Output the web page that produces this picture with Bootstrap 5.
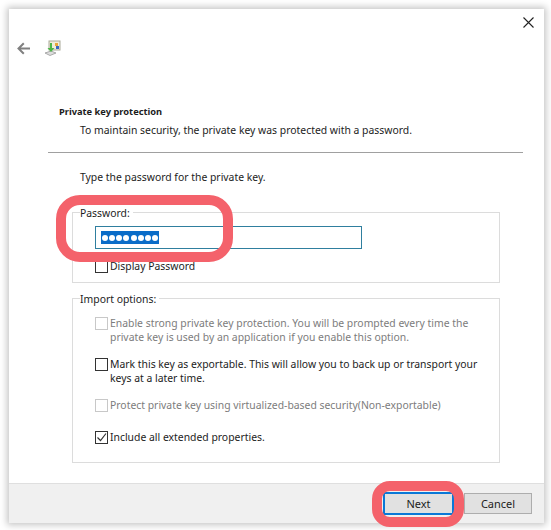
<!DOCTYPE html>
<html lang="en"><head><meta charset="utf-8">
<link href="https://cdn.jsdelivr.net/npm/bootstrap@5.3.0/dist/css/bootstrap.min.css" rel="stylesheet">
<style>
html,body{margin:0;height:530px;overflow:hidden;background:#fff}
body{font:10.4px/14px "Noto Sans","Open Sans",sans-serif;color:#1c1c1c;padding:9px 7px 7px 9px}
.dlg{position:relative;width:535px;height:514px;background:#fff;box-shadow:0 0 7px 2px #c4c4c4}
.topzone{height:96px;padding:26px 0 0 8px}
.closex{position:absolute;left:514px;top:8px}
.ttl{font-weight:700;font-size:9.3px;line-height:14px;padding-left:50px;height:14px}
.sub{padding-left:71px;height:22px;margin-top:4px;line-height:14px}
.rule{height:1px;background:#a0a0a0;margin:7px 21px 0 39px}
.lead-in{padding:17px 0 0 71px;height:40px;line-height:14px}
.gbox{margin:0 44px 0 63px;border:1px solid #dcdcdc;padding:0;min-width:0}
.gbox legend{float:none;width:auto;font-size:10.4px;line-height:14px;margin:0 0 0 7px;padding:2px 3px 0 0;color:#1c1c1c}
.g1{height:79px;margin-top:11px}
.g2{height:173px;margin-top:7px;position:relative}
.pw{margin:6px 0 0 22px;width:267px;height:23px;border:1px solid #2f7f9f;display:flex;align-items:center;padding-left:5px}
.sel{background:#0a6cc8;height:13px;width:58px;display:flex;align-items:center;justify-content:space-between;padding:0 1px;color:#fff}
.dot{width:6px;height:6px;border-radius:50%;background:#fff}
.cbrow{display:flex;gap:2px;align-items:flex-start;margin-left:22px;line-height:13.500px}
.box{flex:none;width:13px;height:13px;border:1px solid #333;margin-top:0;display:block;background:#fff}
.off{color:#7c7c7c}.off .box{border-color:#c8c8c8}
.bar{position:absolute;left:0;right:0;top:474px;height:40px;background:#f0f0f0;border-top:1px solid #dfdfdf;display:flex;justify-content:flex-end;align-items:flex-start;gap:10px;padding:8px 12px 0 0}
.wbtn{width:68px;height:21px;background:#e1e1e1;border:1px solid #adadad;border-radius:0;font:inherit;font-size:11px;color:#1c1c1c;padding:0;line-height:19px;margin-top:1px}
.wbtn.def{border:2px solid #0a78d7;width:71px;height:23px;margin-top:0;line-height:19px}
.hl{position:absolute;border:10px solid #f4626b;background:transparent;pointer-events:none}
.hl1{left:47px;top:186px;width:177px;height:67px;border-radius:24px}
.hl2{left:363px;top:472px;width:92px;height:46px;border-radius:18px}
</style></head>
<body>
<div class="dlg">
  <svg class="closex" width="11" height="11" viewBox="0 0 11 11"><path d="M.5.5l10 10M10.5.5l-10 10" stroke="#222" stroke-width="1.1" fill="none"/></svg>
  <div class="topzone d-flex align-items-start gap-2">
    <svg width="13" height="13" viewBox="0 0 13 13" style="margin:7px 0 0 0"><path d="M13 6.500H2M6.800 1.200L1.500 6.500 6.800 11.800" stroke="#808080" stroke-width="2" fill="none"/></svg>
    <svg width="17" height="17" viewBox="0 0 17 17" style="margin:5px 0 0 6px">
      <rect x="5" y="1" width="11" height="9" fill="#f1ecd8" stroke="#a9a999"/>
      <rect x="11" y="3" width="3" height="3" fill="#e6a73b"/><rect x="12" y="6" width="3" height="3" fill="#3a67c0"/>
      <path d="M1 13l6-2 5 2-6 2.500z" fill="#ddd" stroke="#999" stroke-width=".8"/>
      <path d="M6 3v5H3.500l3.500 4 3.500-4H8V3z" fill="#4cb648"/>
    </svg>
  </div>
  <div class="ttl">Private key protection</div>
  <div class="sub">To maintain security, the private key was protected with a password.</div>
  <div class="rule"></div>
  <div class="lead-in">Type the password for the private key.</div>
  <fieldset class="gbox g1">
    <legend>Password:</legend>
    <div class="pw"><span class="sel"><i class="dot"></i><i class="dot"></i><i class="dot"></i><i class="dot"></i><i class="dot"></i><i class="dot"></i><i class="dot"></i><i class="dot"></i></span></div>
    <div class="cbrow" style="margin-top:11px"><span class="box"></span><span>Display Password</span></div>
  </fieldset>
  <fieldset class="gbox g2">
    <legend>Import options:</legend>
    <div class="cbrow off" style="margin-top:11px"><span class="box"></span><span>Enable strong private key protection. You will be prompted every time the<br>private key is used by an application if you enable this option.</span></div>
    <div class="cbrow" style="margin-top:14px"><span class="box"></span><span>Mark this key as exportable. This will allow you to back up or transport your<br>keys at a later time.</span></div>
    <div class="cbrow off" style="margin-top:14px"><span class="box"></span><span>Protect private key using virtualized-based security(Non-exportable)</span></div>
    <div class="cbrow" style="margin-top:18px"><span class="box"><svg class="d-block" width="11" height="11" viewBox="0 0 11 11"><path d="M1.500 5.500l3 3 5.500-7" stroke="#333" stroke-width="1.200" fill="none"/></svg></span><span>Include all extended properties.</span></div>
  </fieldset>
  <div class="bar"><button class="wbtn def" type="button">Next</button><button class="wbtn" type="button">Cancel</button></div>
  <div class="hl hl1"></div><div class="hl hl2"></div>
</div>
<script src="https://cdn.jsdelivr.net/npm/bootstrap@5.3.0/dist/js/bootstrap.bundle.min.js"></script>
</body></html>
